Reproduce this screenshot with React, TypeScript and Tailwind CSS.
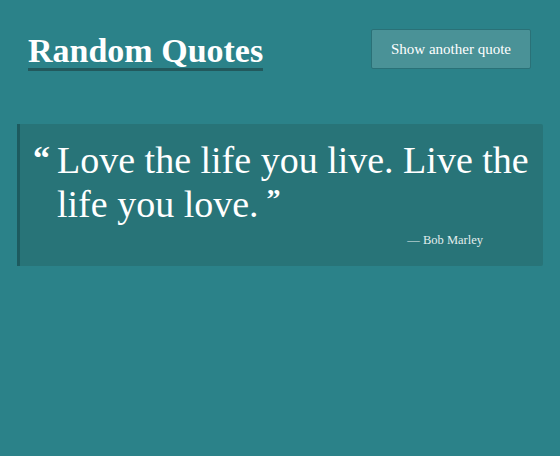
import React, { useState } from "react";

const quotes = [
  { text: "Love the life you live. Live the life you love.", author: "Bob Marley" },
  { text: "The best way to predict the future is to create it.", author: "Peter Drucker" },
  { text: "Simplicity is the ultimate sophistication.", author: "Leonardo da Vinci" },
];

const App = () => {
  const [index, setIndex] = useState(0);
  const quote = quotes[index];

  const nextQuote = () => {
    setIndex((i) => (i + 1) % quotes.length);
  };

  return (
    <div
      className="min-h-[456px] w-full bg-[#2b8289] text-white flex flex-col"
      style={{ fontFamily: '"Liberation Serif", "Times New Roman", serif' }}
    >
      {/* Header */}
      <div className="flex items-start justify-between pl-[28px] pr-[29px] pt-[29px]">
        <h1 className="mt-[4px] text-[34px] font-bold leading-[35px] border-b-[3px] border-[#22595d]">
          Random Quotes
        </h1>
        <button
          onClick={nextQuote}
          className="h-[40px] w-[160px] rounded-[2px] border border-[#2a7177] bg-[#4a9297] text-[15px] text-white"
        >
          Show another quote
        </button>
      </div>

      {/* Quote */}
      <blockquote className="mx-[17px] mt-[53px] rounded-r-[2px] border-l-[3px] border-[#1d5b5f] bg-[#287478] pl-[13px] pr-[12px] pt-[14px] pb-[17px]">
        <div className="flex">
          <span className="w-[24px] shrink-0 text-[34px] font-bold leading-[40px]">&ldquo;</span>
          <p className="text-[38px] leading-[44px]">
            {quote.text}
            <span className="relative top-[3px] ml-[8px] align-top text-[28px] font-bold leading-none">&rdquo;</span>
          </p>
        </div>
        <div className="mt-[5px] pr-[48px] text-right text-[12.5px] leading-[18px] text-[#e3eeee]">
          &mdash; {quote.author}
        </div>
      </blockquote>
    </div>
  );
};

export default App;
